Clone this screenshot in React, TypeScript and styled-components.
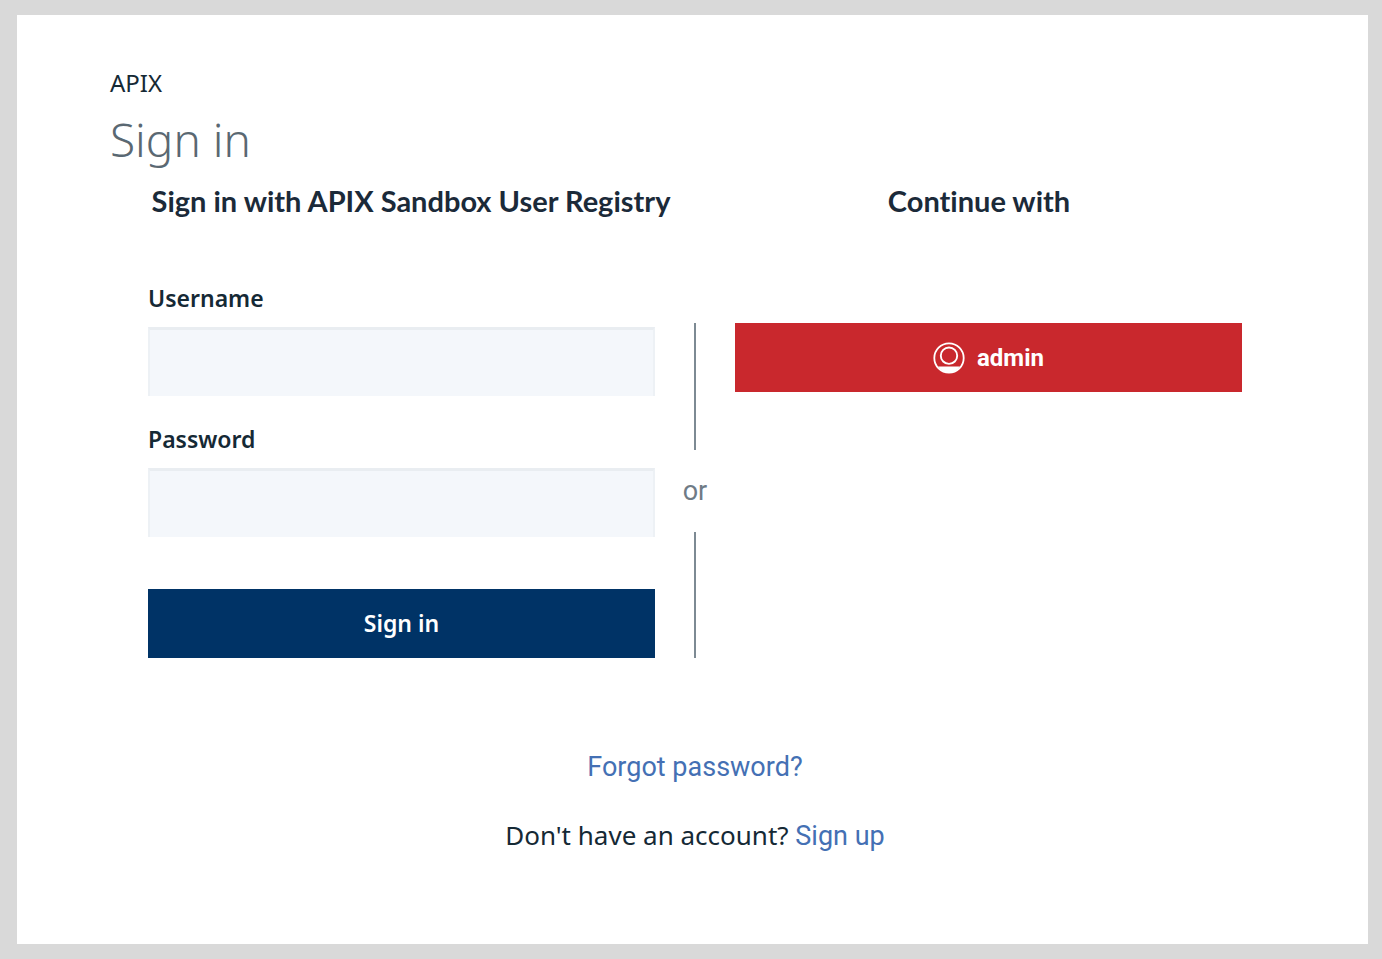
import React from "react";
import styled, { createGlobalStyle } from "styled-components";

const sans = '"Noto Sans", "Open Sans", sans-serif';
const roboto = 'Roboto, "Liberation Sans", sans-serif';

const GlobalStyle = createGlobalStyle`
  *, *::before, *::after { box-sizing: border-box; }
  body { margin: 0; background: #d9d9d9; color: #152935; font-family: ${sans}; }
  h1, h2, p { margin: 0; }
`;

const Frame = styled.div`
  display: flex;
  min-height: 100vh;
  padding: 15px 14px 15px 17px;
`;

const Card = styled.main`
  flex: 1;
  min-width: 0;
  padding: 52px 126px 52px 131px;
  background: #fff;
`;

const Header = styled.header`
  margin-left: -38px;
`;

const Brand = styled.p`
  font-size: 24px;
  line-height: 32px;
`;

const Title = styled.h1`
  color: #5a6872;
  font-size: 46px;
  font-weight: 300;
  line-height: 80px;
`;

const Headings = styled.div`
  display: grid;
  grid-template-columns: 1fr 1fr;
  gap: 48px;
  padding: 0 3px;
`;

const Heading = styled.h2`
  color: #1b2a39;
  font-family: Lato, sans-serif;
  font-size: 29px;
  font-variant-ligatures: none;
  font-weight: 700;
  line-height: 44px;
  text-align: center;
  white-space: nowrap;
`;

const Columns = styled.div`
  display: grid;
  grid-template-columns: 1fr 80px 1fr;
  margin-top: 60px;
`;

const Form = styled.form`
  display: flex;
  flex-direction: column;
`;

const Field = styled.div`
  display: flex;
  flex-direction: column;
  gap: 14px;
  margin-bottom: 28px;
`;

const Label = styled.label`
  font-size: 23px;
  font-weight: 600;
  line-height: 30px;
`;

const Input = styled.input`
  width: 100%;
  height: 69px;
  padding: 0 20px;
  border: 2px solid #edf1f5;
  border-top: 3px solid #e9edf1;
  border-bottom: 0;
  border-radius: 0;
  background: #f4f7fb;
  color: inherit;
  font: 23px ${sans};
`;

const Button = styled.button<{ $tone: "primary" | "admin" }>`
  display: flex;
  align-items: center;
  justify-content: center;
  gap: 12px;
  width: 100%;
  height: 69px;
  padding: ${(p) => (p.$tone === "admin" ? "0" : "0 0 2px")};
  border: 0;
  background: ${(p) => (p.$tone === "admin" ? "#c9282d" : "#003366")};
  color: #fff;
  font-family: ${(p) => (p.$tone === "admin" ? roboto : sans)};
  font-size: ${(p) => (p.$tone === "admin" ? 24 : 23)}px;
  font-weight: ${(p) => (p.$tone === "admin" ? 700 : 600)};
  cursor: pointer;
`;

const SubmitArea = styled.div`
  margin-top: 24px;
`;

const Divider = styled.div`
  display: flex;
  flex-direction: column;
  align-items: center;
  padding-top: 40px;
  color: #6f7b86;
  font-family: ${roboto};
  font-size: 27px;
  line-height: 82px;

  &::before,
  &::after {
    content: "";
    flex: 1;
    width: 2px;
    background: #7d8a93;
  }
`;

const Providers = styled.div`
  padding-top: 40px;
`;

const Footer = styled.footer`
  display: flex;
  flex-direction: column;
  align-items: center;
  gap: 32px;
  margin-top: 91px;
  font-size: 26px;
  line-height: 36px;
`;

const Link = styled.a`
  color: #4470b4;
  font-family: ${roboto};
  font-size: 27px;
  text-decoration: none;
`;

const UserIcon = () => (
  <svg width="32" height="32" viewBox="0 0 32 32" fill="none" stroke="#fff" aria-hidden="true">
    <path d="M5 24.5h22A14.8 14.8 0 0 1 16 30.8 14.8 14.8 0 0 1 5 24.5Z" fill="#fff" stroke="none" />
    <circle cx="16" cy="16" r="14.7" strokeWidth="1.8" />
    <circle cx="16" cy="13.7" r="8.2" strokeWidth="1.9" />
  </svg>
);

export default function App() {
  return (
    <>
      <GlobalStyle />
      <Frame>
        <Card>
          <Header>
            <Brand>APIX</Brand>
            <Title>Sign in</Title>
          </Header>
          <Headings>
            <Heading>Sign in with APIX Sandbox User Registry</Heading>
            <Heading>Continue with</Heading>
          </Headings>
          <Columns>
            <Form onSubmit={(e) => e.preventDefault()}>
              <Field>
                <Label htmlFor="username">Username</Label>
                <Input id="username" type="text" autoComplete="username" />
              </Field>
              <Field>
                <Label htmlFor="password">Password</Label>
                <Input id="password" type="password" autoComplete="current-password" />
              </Field>
              <SubmitArea>
                <Button type="submit" $tone="primary">Sign in</Button>
              </SubmitArea>
            </Form>
            <Divider>or</Divider>
            <Providers>
              <Button type="button" $tone="admin">
                <UserIcon />
                admin
              </Button>
            </Providers>
          </Columns>
          <Footer>
            <Link href="#forgot">Forgot password?</Link>
            <p>
              Don't have an account? <Link href="#signup">Sign up</Link>
            </p>
          </Footer>
        </Card>
      </Frame>
    </>
  );
}
